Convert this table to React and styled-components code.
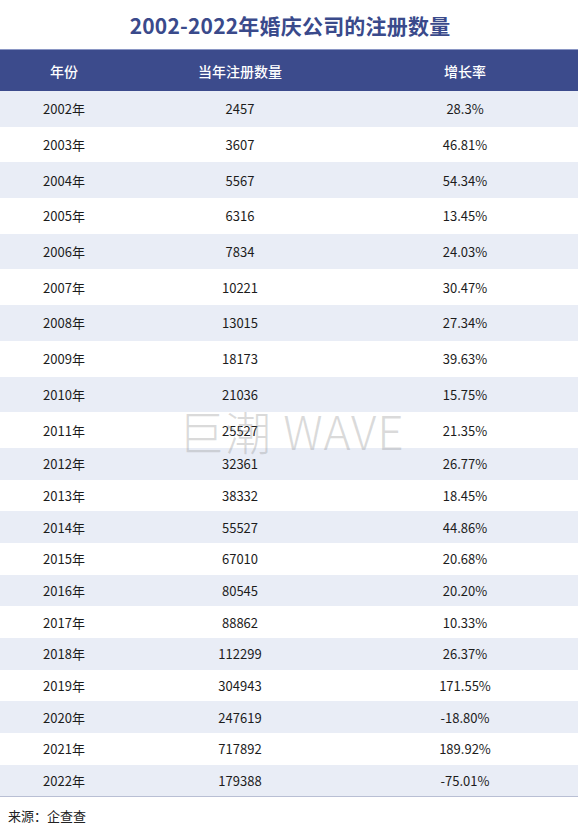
import React from "react";
import styled, { createGlobalStyle } from "styled-components";

const rows = [
  ["2002年", "2457", "28.3%"],
  ["2003年", "3607", "46.81%"],
  ["2004年", "5567", "54.34%"],
  ["2005年", "6316", "13.45%"],
  ["2006年", "7834", "24.03%"],
  ["2007年", "10221", "30.47%"],
  ["2008年", "13015", "27.34%"],
  ["2009年", "18173", "39.63%"],
  ["2010年", "21036", "15.75%"],
  ["2011年", "25527", "21.35%"],
  ["2012年", "32361", "26.77%"],
  ["2013年", "38332", "18.45%"],
  ["2014年", "55527", "44.86%"],
  ["2015年", "67010", "20.68%"],
  ["2016年", "80545", "20.20%"],
  ["2017年", "88862", "10.33%"],
  ["2018年", "112299", "26.37%"],
  ["2019年", "304943", "171.55%"],
  ["2020年", "247619", "-18.80%"],
  ["2021年", "717892", "189.92%"],
  ["2022年", "179388", "-75.01%"],
];

const GlobalStyle = createGlobalStyle`
  body {
    margin: 0;
    background: #ffffff;
    font-family: "Noto Sans CJK SC", "Noto Sans", sans-serif;
  }
`;

export default function App() {
  return (
    <Page>
      <GlobalStyle />
      <Title>2002-2022年婚庆公司的注册数量</Title>
      <Table>
        <HeadRow>
          <HeadCell>年份</HeadCell>
          <HeadCell>当年注册数量</HeadCell>
          <HeadCell>增长率</HeadCell>
        </HeadRow>
        {rows.map((r, i) => (
          <Row key={r[0]} shaded={i % 2 === 0} tall={i < 10}>
            <Cell>{r[0]}</Cell>
            <Cell>{r[1]}</Cell>
            <Cell>{r[2]}</Cell>
          </Row>
        ))}
      </Table>
      <Source>来源：企查查</Source>
      <Watermark>巨潮 WAVE</Watermark>
    </Page>
  );
}

const Page = styled.div`
  position: relative;
  width: 580px;
  height: 830px;
  overflow: hidden;
`;

const Title = styled.h1`
  margin: 0;
  height: 49px;
  display: flex;
  align-items: center;
  justify-content: center;
  font-size: 21px;
  font-weight: 700;
  color: #3a4a8b;
  letter-spacing: 0.2px;
`;

const Table = styled.div`
  width: 578px;
  border-bottom: 1.5px solid #b9bfd4;
`;

const HeadRow = styled.div`
  display: grid;
  grid-template-columns: 128px 224px 226px;
  height: 41px;
  align-items: center;
  background: #3c4b8c;
  border-top: 1px solid #8a96c4;
`;

const HeadCell = styled.div`
  text-align: center;
  color: #ffffff;
  font-size: 14px;
  font-weight: 500;
`;

const Row = styled.div`
  display: grid;
  grid-template-columns: 128px 224px 226px;
  height: ${({ tall }) => (tall ? "35.7px" : "31.7px")};
  align-items: center;
  background: ${({ shaded }) => (shaded ? "#e9edf6" : "#ffffff")};
`;

const Cell = styled.div`
  text-align: center;
  color: #1c1c1c;
  font-size: 13px;
`;

const Source = styled.div`
  padding: 9px 0 0 8px;
  font-size: 13px;
  color: #222222;
`;

const Watermark = styled.div`
  position: absolute;
  left: 178px;
  top: 397px;
  font-size: 46px;
  font-weight: 300;
  color: rgba(150, 150, 150, 0.35);
  letter-spacing: 1px;
  white-space: nowrap;
  pointer-events: none;
`;
